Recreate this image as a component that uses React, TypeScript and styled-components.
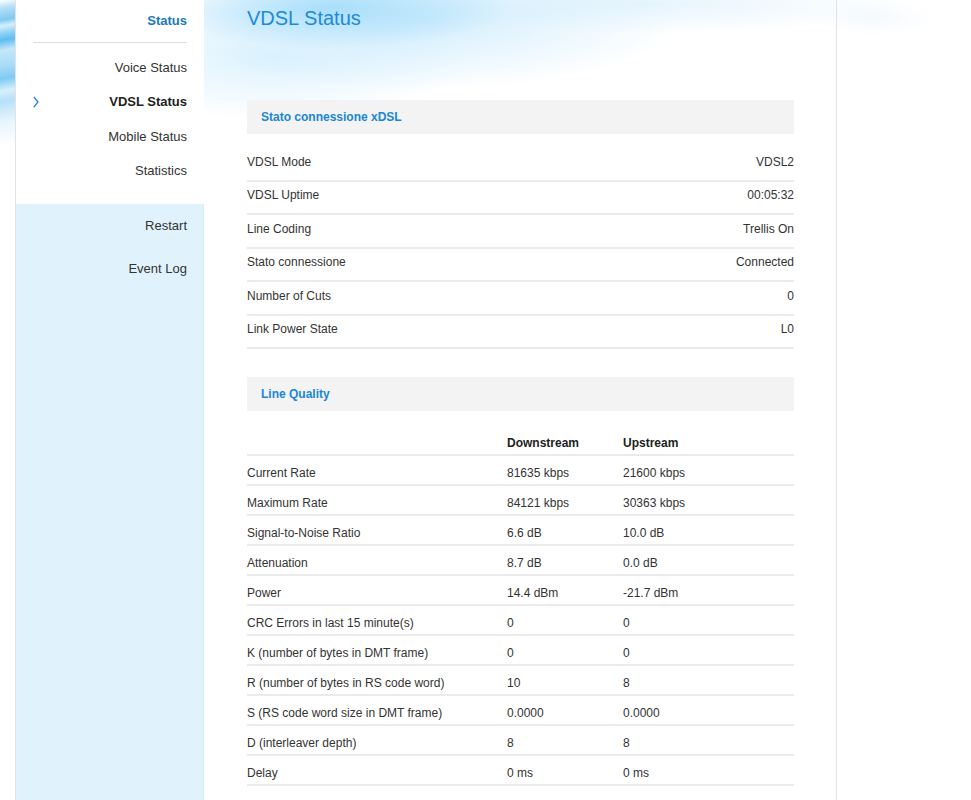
import React from 'react';
import styled, { createGlobalStyle } from 'styled-components';

const GlobalStyle = createGlobalStyle`
  html, body {
    margin: 0;
    padding: 0;
    background: #fff;
  }
  body {
    font-family: "Liberation Sans", Arial, sans-serif;
    color: #333;
  }
`;

const info = [
  ['VDSL Mode', 'VDSL2'],
  ['VDSL Uptime', '00:05:32'],
  ['Line Coding', 'Trellis On'],
  ['Stato connessione', 'Connected'],
  ['Number of Cuts', '0'],
  ['Link Power State', 'L0'],
];

const quality = [
  ['Current Rate', '81635 kbps', '21600 kbps'],
  ['Maximum Rate', '84121 kbps', '30363 kbps'],
  ['Signal-to-Noise Ratio', '6.6 dB', '10.0 dB'],
  ['Attenuation', '8.7 dB', '0.0 dB'],
  ['Power', '14.4 dBm', '-21.7 dBm'],
  ['CRC Errors in last 15 minute(s)', '0', '0'],
  ['K (number of bytes in DMT frame)', '0', '0'],
  ['R (number of bytes in RS code word)', '10', '8'],
  ['S (RS code word size in DMT frame)', '0.0000', '0.0000'],
  ['D (interleaver depth)', '8', '8'],
  ['Delay', '0 ms', '0 ms'],
];

const statusItems = ['Voice Status', 'VDSL Status', 'Mobile Status', 'Statistics'];
const otherItems = ['Restart', 'Event Log'];

export default function App() {
  return (
    <>
      <GlobalStyle />
      <Page>
        <LeftStrip />
        <Nav>
          <NavTop>
            <NavTitle>Status</NavTitle>
            <NavDivider />
            {statusItems.map((item) => (
              <NavItem key={item} $active={item === 'VDSL Status'}>
                {item === 'VDSL Status' && (
                  <Chevron viewBox="0 0 6 12" width="6" height="12">
                    <polyline points="0.8,0.8 5,6 0.8,11.2" fill="none" stroke="#1f7fd8" strokeWidth="1.3" />
                  </Chevron>
                )}
                {item}
              </NavItem>
            ))}
          </NavTop>
          <NavBottom>
            {otherItems.map((item) => (
              <NavLink key={item}>{item}</NavLink>
            ))}
          </NavBottom>
        </Nav>
        <Main>
          <Title>VDSL Status</Title>
          <SectionHeader $top={70}>Stato connessione xDSL</SectionHeader>
          <InfoList>
            {info.map(([label, value]) => (
              <InfoRow key={label}>
                <span>{label}</span>
                <span>{value}</span>
              </InfoRow>
            ))}
          </InfoList>
          <SectionHeader $top={28}>Line Quality</SectionHeader>
          <QualityTable>
            <QualityHead>
              <span />
              <span>Downstream</span>
              <span>Upstream</span>
            </QualityHead>
            {quality.map(([label, down, up]) => (
              <QualityRow key={label}>
                <span>{label}</span>
                <span>{down}</span>
                <span>{up}</span>
              </QualityRow>
            ))}
          </QualityTable>
        </Main>
        <Aside />
      </Page>
    </>
  );
}

const Page = styled.div`
  display: flex;
  min-height: 100vh;
  background:
    radial-gradient(ellipse 180px 40px at 330px 8px, rgba(150, 215, 250, 0.75), rgba(150, 215, 250, 0) 100%),
    radial-gradient(ellipse 260px 70px at 420px 20px, rgba(190, 230, 252, 0.7), rgba(190, 230, 252, 0) 100%),
    radial-gradient(ellipse 200px 60px at 270px 60px, rgba(200, 235, 252, 0.6), rgba(200, 235, 252, 0) 100%),
    radial-gradient(ellipse 260px 30px at 650px 4px, rgba(215, 238, 252, 0.6), rgba(215, 238, 252, 0) 100%),
    radial-gradient(ellipse 60px 18px at 875px 18px, rgba(235, 245, 251, 0.5), rgba(235, 245, 251, 0) 100%),
    #fff;
`;

const LeftStrip = styled.div`
  width: 15px;
  flex-shrink: 0;
  border-right: 1px solid #e2e2e2;
  background:
    linear-gradient(170deg,
      rgba(255, 255, 255, 0) 0px,
      #b8e1f8 8px,
      #7fcaf3 20px,
      #d6eefb 26px,
      #89cff5 34px,
      #5fbdf0 40px,
      #c5e7fa 50px,
      #a7dbf7 66px,
      #7fcaf4 78px,
      #d8effb 90px,
      #b7e0f8 100px,
      #e6f5fd 120px,
      #ffffff 145px);
`;

const Nav = styled.nav`
  width: 188px;
  flex-shrink: 0;
  display: flex;
  flex-direction: column;
  background: #fff;
`;

const NavTop = styled.div`
  height: 204px;
  padding: 13px 17px 0;
  box-sizing: border-box;
`;

const NavTitle = styled.div`
  text-align: right;
  font-size: 13px;
  line-height: 16px;
  font-weight: bold;
  color: #1a78bd;
`;

const NavDivider = styled.div`
  height: 1px;
  background: #dcdcdc;
  margin: 13px 0 8px;
`;

const NavItem = styled.div<{ $active?: boolean }>`
  position: relative;
  text-align: right;
  font-size: 13px;
  line-height: 34.4px;
  height: 34.4px;
  font-weight: ${({ $active }) => ($active ? 'bold' : 'normal')};
  color: ${({ $active }) => ($active ? '#222' : '#333')};
`;

const Chevron = styled.svg`
  position: absolute;
  left: 0;
  top: 11px;
`;

const NavBottom = styled.div`
  flex: 1;
  background: #e0f3fd;
  border-right: 1px solid #d4ecfa;
  padding-right: 16px;
`;

const NavLink = styled.div`
  text-align: right;
  font-size: 13px;
  line-height: 43px;
  height: 43px;
  color: #333;
`;

const Main = styled.main`
  width: 547px;
  flex-shrink: 0;
  padding: 6px 42px 40px 43px;
  border-right: 1px solid #e2e2e2;
`;

const Title = styled.h1`
  margin: 0;
  font-size: 20px;
  line-height: 24px;
  font-weight: normal;
  color: #1c8ad9;
`;

const SectionHeader = styled.div<{ $top: number }>`
  margin-top: ${({ $top }) => $top}px;
  height: 34px;
  line-height: 34px;
  padding-left: 14px;
  background: #f3f3f3;
  font-size: 12px;
  font-weight: bold;
  color: #1a86d6;
`;

const InfoList = styled.div`
  margin-top: 14px;
`;

const InfoRow = styled.div`
  display: flex;
  justify-content: space-between;
  font-size: 12px;
  line-height: 14px;
  padding: 6.5px 0 11px;
  border-bottom: 2px solid #ebebeb;
  color: #333;
`;

const QualityTable = styled.div`
  margin-top: 25px;
`;

const QualityGrid = styled.div`
  display: grid;
  grid-template-columns: 260px 116px 1fr;
  font-size: 12px;
  line-height: 14px;
  border-bottom: 2px solid #ebebeb;
`;

const QualityHead = styled(QualityGrid)`
  font-weight: bold;
  color: #222;
  padding: 0 0 4px;
`;

const QualityRow = styled(QualityGrid)`
  color: #333;
  padding: 10px 0 4px;
`;

const Aside = styled.div`
  flex: 1;
`;
